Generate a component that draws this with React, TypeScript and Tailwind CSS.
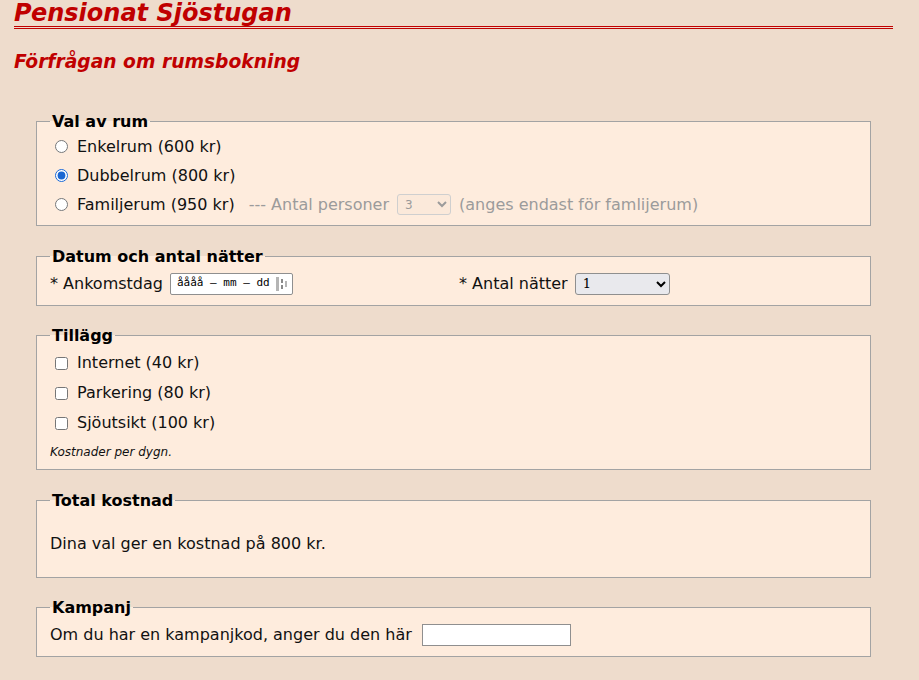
import React from 'react';

const font = { fontFamily: '"DejaVu Sans", Verdana, sans-serif' };

function Legend({ children }: { children: React.ReactNode }) {
  return <legend className="px-[2px] text-[16px] font-bold leading-[19px] text-black">{children}</legend>;
}

function Box({ title, children, className = '' }: { title: string; children: React.ReactNode; className?: string }) {
  return (
    <fieldset className={`border border-[#a3a3a3] bg-[#feecdd] px-[13px] ${className}`}>
      <Legend>{title}</Legend>
      {children}
    </fieldset>
  );
}

function CalendarIcon() {
  return (
    <svg width="11" height="14" viewBox="0 0 11 14" className="ml-auto shrink-0">
      <rect x="0" y="0" width="3" height="14" fill="#b5b5b5" />
      <rect x="5" y="2" width="2" height="4" fill="#8a8a8a" />
      <rect x="5" y="8" width="2" height="4" fill="#8a8a8a" />
      <rect x="9" y="4" width="2" height="6" fill="#b5b5b5" />
    </svg>
  );
}

export default function App() {
  return (
    <div className="min-h-screen bg-[#eedccc] pl-[14px] pr-[26px] text-[16px] text-[#111]" style={font}>
      <h1 className="border-b-[3px] border-double border-b-[#c00000] text-[24px] font-bold italic leading-[26px] text-[#c00000]">
        Pensionat Sjöstugan
      </h1>
      <h2 className="mt-[21px] text-[18.7px] font-bold italic leading-[24px] text-[#c00000]">Förfrågan om rumsbokning</h2>

      <form className="mx-[22px] mt-[38px] flex flex-col gap-[21px] pb-[20px]">
        <Box title="Val av rum" className="pb-[6px]">
          <div className="mt-[1px]">
            {[
              { id: 'e', label: 'Enkelrum (600 kr)' },
              { id: 'd', label: 'Dubbelrum (800 kr)', checked: true },
              { id: 'f', label: 'Familjerum (950 kr)' },
            ].map((r) => (
              <div key={r.id} className="flex h-[29px] items-center">
                <input
                  type="radio"
                  name="rum"
                  id={r.id}
                  defaultChecked={r.checked}
                  className="ml-[5px] mr-[9px] h-[13px] w-[13px] accent-[#1a66d2]"
                />
                <label htmlFor={r.id}>{r.label}</label>
                {r.id === 'f' && (
                  <span className="ml-[14px] flex items-center text-[#9b9b9b]">
                    --- Antal personer
                    <select
                      disabled
                      defaultValue="3"
                      className="mx-[8px] h-[21px] w-[54px] rounded-[3px] border border-[#cfcfcf] bg-[#fbe9da] pl-[3px] text-[12px] text-[#9b9b9b]"
                    >
                      <option>1</option>
                      <option>2</option>
                      <option>3</option>
                      <option>4</option>
                    </select>
                    (anges endast för famlijerum)
                  </span>
                )}
              </div>
            ))}
          </div>
        </Box>

        <Box title="Datum och antal nätter" className="pb-[4px]">
          <div className="grid h-[35px] grid-cols-[409px_1fr] items-center">
            <div className="flex items-center">
              <span>* Ankomstdag</span>
              <div className="ml-[7px] flex h-[22px] w-[123px] items-center rounded-[2px] border border-[#8f8f8f] bg-white pl-[6px] pr-[5px] text-[11px] text-black" style={{ fontFamily: '"DejaVu Sans Mono", monospace' }}>
                <span>åååå – mm – dd</span>
                <CalendarIcon />
              </div>
            </div>
            <div className="flex items-center">
              <span>* Antal nätter</span>
              <select
                defaultValue="1"
                className="ml-[7px] h-[22px] w-[95px] rounded-[3px] border border-[#8f8f8f] bg-[#e9e9ed] pl-[3px] text-[13px] text-black"
                style={{ fontFamily: '"DejaVu Serif", serif' }}
              >
                {[1, 2, 3, 4, 5, 6, 7].map((n) => (
                  <option key={n}>{n}</option>
                ))}
              </select>
            </div>
          </div>
        </Box>

        <Box title="Tillägg" className="-mt-[1px] pb-[9px]">
          <div className="mt-[3px]">
            {['Internet (40 kr)', 'Parkering (80 kr)', 'Sjöutsikt (100 kr)'].map((t, i) => (
              <div key={t} className="flex h-[30px] items-center">
                <input type="checkbox" id={`c${i}`} className="ml-[5px] mr-[9px] h-[13px] w-[13px]" />
                <label htmlFor={`c${i}`}>{t}</label>
              </div>
            ))}
          </div>
          <p className="mt-[6px] text-[12px] italic leading-[16px]">Kostnader per dygn.</p>
        </Box>

        <Box title="Total kostnad" className="pb-[24px]">
          <p className="mt-[24px] leading-[19px]">Dina val ger en kostnad på 800 kr.</p>
        </Box>

        <Box title="Kampanj" className="-mt-[1px] pb-[3px]">
          <div className="flex h-[36px] items-center">
            <span>Om du har en kampanjkod, anger du den här</span>
            <input type="text" className="ml-[10px] h-[22px] w-[149px] border border-[#8f8f8f] bg-white px-[3px] text-[13px]" />
          </div>
        </Box>
      </form>
    </div>
  );
}
